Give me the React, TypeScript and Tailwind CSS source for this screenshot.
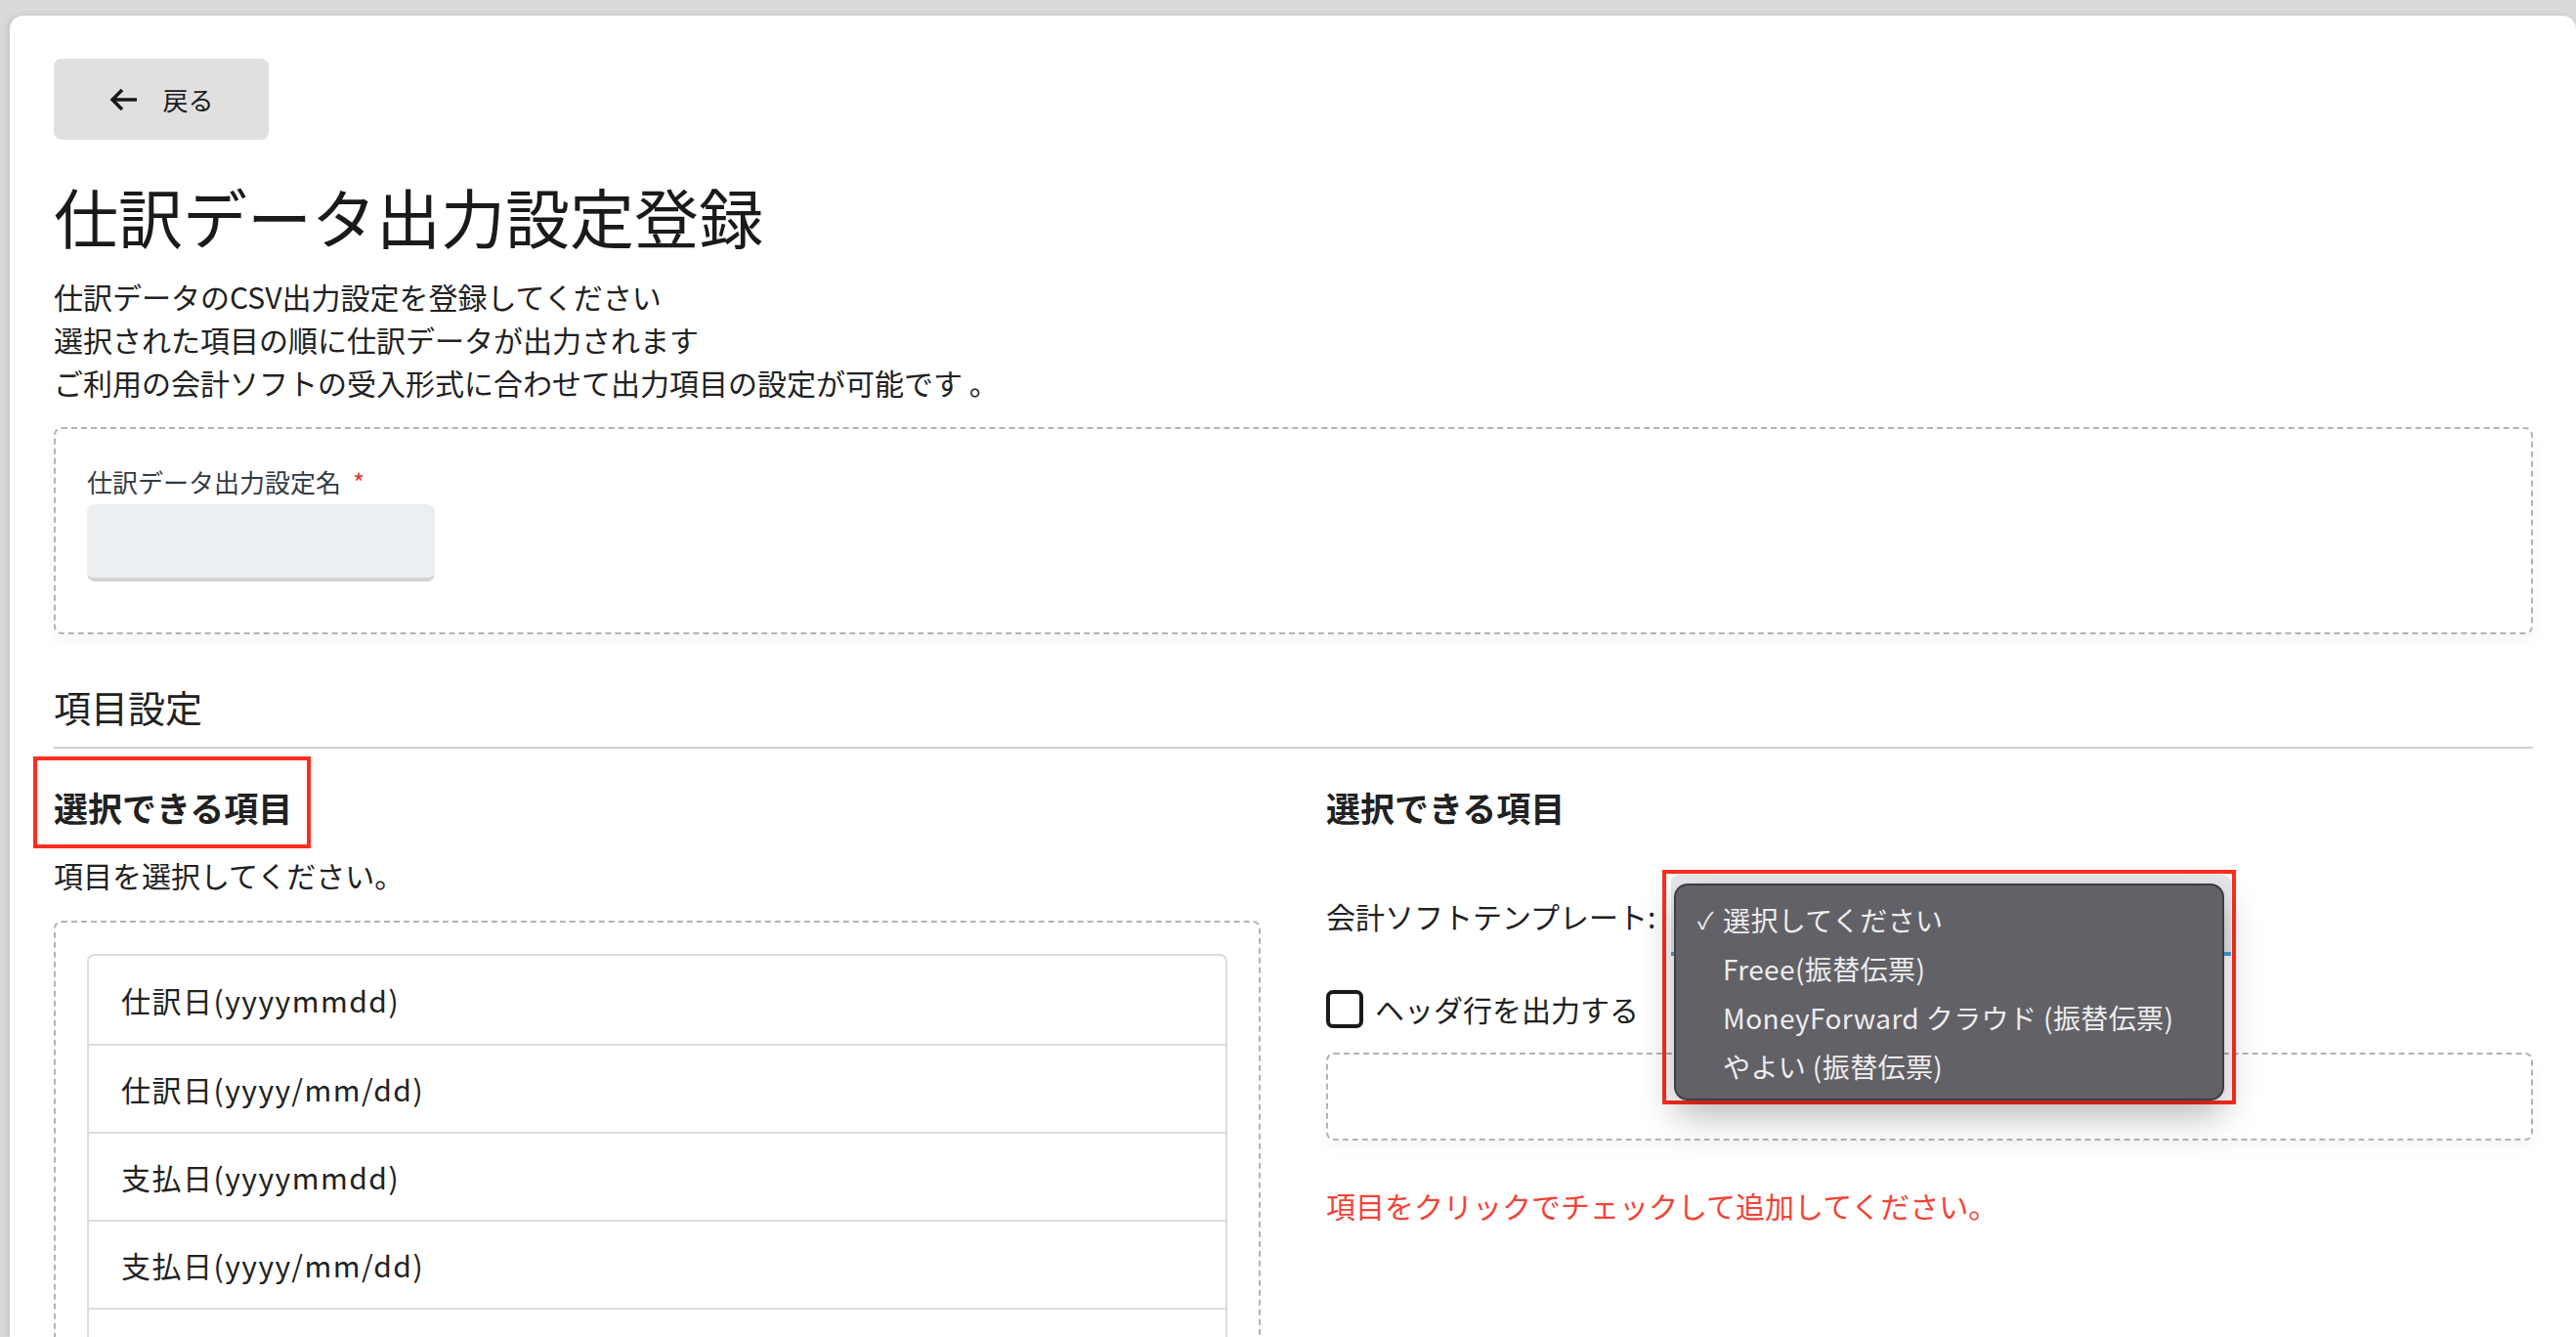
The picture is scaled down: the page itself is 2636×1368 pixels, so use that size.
import React from "react";
import { ChevronDown } from "lucide-react";

const items = ["仕訳日(yyyymmdd)", "仕訳日(yyyy/mm/dd)", "支払日(yyyymmdd)", "支払日(yyyy/mm/dd)", "勘定科目"];

const templates = [
  { label: "選択してください", checked: true },
  { label: "Freee(振替伝票)", checked: false },
  { label: "MoneyForward クラウド (振替伝票)", checked: false },
  { label: "やよい (振替伝票)", checked: false },
];

function BackArrow() {
  return (
    <svg width="30" height="24" viewBox="0 0 30 24" fill="none" stroke="currentColor" strokeWidth="3.5">
      <path d="M29 12H4" />
      <path d="M14 2 4 12l10 10" />
    </svg>
  );
}

export default function App() {
  return (
    <div className="h-[1368px] overflow-hidden bg-[#d9d9d9] pt-[16px] pl-[10px] font-['Noto_Sans_CJK_JP',sans-serif] text-[#212121]">
      <div className="h-full rounded-t-[14px] bg-white pl-[45px] pr-[44px] pt-[44px] shadow-[-2px_0_6px_rgba(0,0,0,0.10)]">
        {/* back */}
        <button className="flex h-[83px] w-[220px] items-center justify-center gap-[25px] rounded-[8px] bg-[#e0e0e0] text-[26px] leading-none text-[#1a1a1a]">
          <BackArrow />
          <span>戻る</span>
        </button>

        <h1 className="mt-[37px] text-[66px] font-normal leading-[80px] text-[#1a1a1a]">仕訳データ出力設定登録</h1>

        <div className="mt-[21px] text-[30px] leading-[44px]">
          <p>仕訳データのCSV出力設定を登録してください</p>
          <p>選択された項目の順に仕訳データが出力されます</p>
          <p>ご利用の会計ソフトの受入形式に合わせて出力項目の設定が可能です 。</p>
        </div>

        {/* name */}
        <div className="mt-[24px] h-[212px] rounded-[8px] border-2 border-dashed border-[#b3b3b3] px-[32px] pt-[36px] shadow-[0_8px_14px_rgba(0,0,0,0.04)]">
          <label className="flex items-center gap-[12px] text-[26px] leading-[36px] text-[#343b41]">
            <span>仕訳データ出力設定名</span>
            <span className="text-[#e53935]">*</span>
          </label>
          <div className="mt-[5px] h-[79px] w-[356px] rounded-[8px] border-b-[4px] border-[#d3d3d3] bg-[#eceff1]" />
        </div>

        <h2 className="mt-[49px] text-[38px] font-normal leading-[50px]">項目設定</h2>
        <div className="mt-[16px] h-[2px] bg-[#cfcfcf]" />

        <div className="grid grid-cols-2 gap-x-[67px]">
          {/* left */}
          <div>
            <div className="relative mt-[36px]">
              <h3 className="text-[35px] font-bold leading-[48px]">選択できる項目</h3>
              <div className="absolute left-[-21px] top-[-28px] h-[94px] w-[284px] border-[4px] border-[#ff2d1f]" />
            </div>
            <p className="mt-[23px] text-[30px] leading-[44px]">項目を選択してください。</p>
            <div className="mt-[25px] h-[600px] rounded-[8px] border-2 border-dashed border-[#b3b3b3] px-[32px] pt-[32px]">
              <div className="overflow-hidden rounded-t-[8px] border-2 border-[#dcdcdc]">
                {items.map((it, i) => (
                  <div
                    key={it}
                    className={`flex h-[90px] items-center pl-[33px] text-[30px] tracking-[1.5px] ${i > 0 ? "border-t-2 border-[#dcdcdc]" : ""}`}
                  >
                    {it}
                  </div>
                ))}
              </div>
            </div>
          </div>

          {/* right */}
          <div>
            <h3 className="mt-[36px] text-[35px] font-bold leading-[48px]">選択できる項目</h3>

            <div className="mt-[45px] flex h-[83px] items-center">
              <span className="w-[353px] shrink-0 text-[30px] leading-[44px]">会計ソフトテンプレート:</span>
              <div className="relative h-[83px] w-[573px] shrink-0">
                <div className="flex h-full items-center justify-end rounded-t-[8px] border-b-[4px] border-[#3ea3dc] bg-[#e6e8eb] pr-[6px]">
                  <ChevronDown size={26} className="text-[#555]" />
                </div>

                {/* red annotation */}
                <div className="absolute left-[-9px] top-[-5px] z-20 h-[240px] w-[587px] border-[4px] border-[#ff2d1f]" />

                {/* native menu */}
                <div className="absolute left-[3px] top-[9px] z-30 h-[222px] w-[563px] rounded-[14px] border-2 border-[#3e3d42] bg-[#626167] pt-[10px] text-[28px] leading-[50px] text-[#ededed] shadow-[0_16px_36px_rgba(0,0,0,0.28)]">
                  {templates.map((t) => (
                    <div key={t.label} className="flex items-center pl-[22px]">
                      <span className="w-[26px] text-[24px]">{t.checked ? "✓" : ""}</span>
                      <span className="tracking-[0.4px]">{t.label}</span>
                    </div>
                  ))}
                </div>
              </div>
            </div>

            <label className="mt-[34px] flex h-[40px] items-center gap-[12px] text-[30px]">
              <span className="h-[39px] w-[38px] rounded-[7px] border-[4px] border-[#1a1a1a]" />
              <span>ヘッダ行を出力する</span>
            </label>

            <div className="mt-[25px] h-[90px] rounded-[8px] border-2 border-dashed border-[#b3b3b3] shadow-[0_8px_14px_rgba(0,0,0,0.04)]" />

            <p className="mt-[44px] text-[30px] leading-[44px] text-[#f44336]">項目をクリックでチェックして追加してください。</p>
          </div>
        </div>
      </div>
    </div>
  );
}
